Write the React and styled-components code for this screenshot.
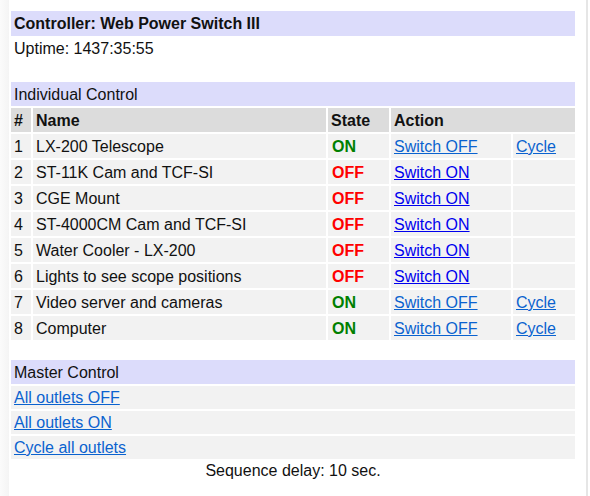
import React from "react";
import styled, { createGlobalStyle } from "styled-components";

const outlets = [
  { id: 1, name: "LX-200 Telescope", on: true },
  { id: 2, name: "ST-11K Cam and TCF-SI", on: false },
  { id: 3, name: "CGE Mount", on: false },
  { id: 4, name: "ST-4000CM Cam and TCF-SI", on: false },
  { id: 5, name: "Water Cooler - LX-200", on: false },
  { id: 6, name: "Lights to see scope positions", on: false },
  { id: 7, name: "Video server and cameras", on: true },
  { id: 8, name: "Computer", on: true },
];

export default function App() {
  return (
    <>
      <GlobalStyle />
      <Page>
        <LeftEdge />
        <Main>
          <Bar $bold $h={25}>Controller: Web Power Switch III</Bar>
          <Line>Uptime: 1437:35:55</Line>

          <Section>
            <Bar>Individual Control</Bar>
            <Grid>
              <HeadCell>#</HeadCell>
              <HeadCell>Name</HeadCell>
              <HeadCell>State</HeadCell>
              <HeadCell $span={2}>Action</HeadCell>
              {outlets.map((o) => (
                <React.Fragment key={o.id}>
                  <Cell>{o.id}</Cell>
                  <Cell $pad={3}>{o.name}</Cell>
                  <Cell $pad={4}>
                    <State $on={o.on}>{o.on ? "ON" : "OFF"}</State>
                  </Cell>
                  <Cell>
                    <Link href="#" $visited={o.on}>
                      {o.on ? "Switch OFF" : "Switch ON"}
                    </Link>
                  </Cell>
                  <Cell>
                    {o.on && (
                      <Link href="#" $visited>
                        Cycle
                      </Link>
                    )}
                  </Cell>
                </React.Fragment>
              ))}
            </Grid>
          </Section>

          <Section>
            <Bar>Master Control</Bar>
            <MasterList>
              <MasterRow>
                <Link href="#" $visited>All outlets OFF</Link>
              </MasterRow>
              <MasterRow>
                <Link href="#" $visited>All outlets ON</Link>
              </MasterRow>
              <MasterRow>
                <Link href="#" $visited>Cycle all outlets</Link>
              </MasterRow>
            </MasterList>
            <Footer>Sequence delay: 10 sec.</Footer>
          </Section>
        </Main>
        <RightRule />
      </Page>
    </>
  );
}

const GlobalStyle = createGlobalStyle`
  body {
    margin: 0;
    background: #ffffff;
    font-family: "Liberation Sans", Arial, sans-serif;
    font-size: 16px;
    color: #111;
  }
`;

const Page = styled.div`
  display: flex;
  width: 590px;
  height: 496px;
  overflow: hidden;
`;

const LeftEdge = styled.div`
  width: 9px;
  flex: none;
  background: linear-gradient(90deg, #fbfbfb, #f4f4f4);
  margin-right: 2px;
`;

const Main = styled.div`
  width: 564px;
  flex: none;
  padding-top: 11px;
  display: flex;
  flex-direction: column;
`;

const RightRule = styled.div`
  width: 2px;
  flex: none;
  margin-left: 11px;
  background: #e6e6e6;
`;

const Bar = styled.div`
  height: ${(p) => p.$h || 24}px;
  line-height: ${(p) => (p.$h || 24) + 1}px;
  padding-left: 3px;
  background: #dcdcfb;
  font-weight: ${(p) => (p.$bold ? "bold" : "normal")};
`;

const Line = styled.div`
  height: 26px;
  line-height: 26px;
  padding-left: 3px;
`;

const Section = styled.div`
  margin-top: 20px;
`;

const Grid = styled.div`
  display: grid;
  grid-template-columns: 20px 293px 61px 120px 1fr;
  grid-auto-rows: 24px;
  gap: 2px;
  margin-top: 2px;
`;

const HeadCell = styled.div`
  grid-column: span ${(p) => p.$span || 1};
  background: #dcdcdc;
  font-weight: bold;
  line-height: 25px;
  padding-left: 3px;
`;

const Cell = styled.div`
  background: #f2f2f2;
  line-height: 25px;
  padding-left: ${(p) => p.$pad || 3}px;
  white-space: nowrap;
`;

const State = styled.span`
  font-weight: bold;
  color: ${(p) => (p.$on ? "#008000" : "#ff0000")};
`;

const Link = styled.a`
  color: ${(p) => (p.$visited ? "#0a62cf" : "#0000ee")};
  text-decoration: underline;
`;

const MasterList = styled.div`
  display: flex;
  flex-direction: column;
  gap: 2px;
  margin-top: 2px;
`;

const MasterRow = styled.div`
  height: 23px;
  line-height: 24px;
  padding-left: 3px;
  background: #f2f2f2;
`;

const Footer = styled.div`
  text-align: center;
  line-height: 24px;
`;
